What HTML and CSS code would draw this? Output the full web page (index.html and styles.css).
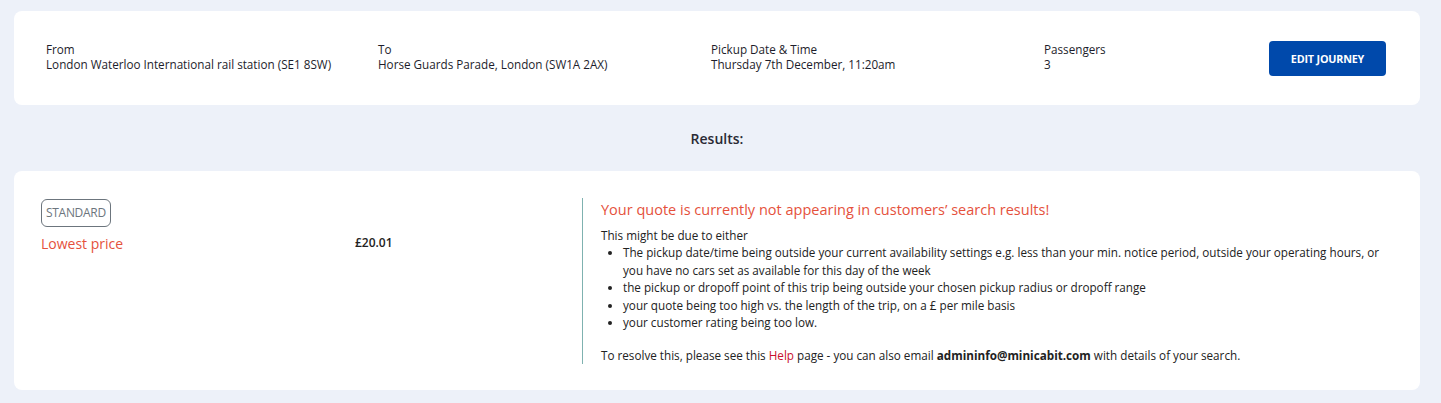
FILE: index.html
```html
<!DOCTYPE html>
<html>
<head>
<meta charset="utf-8">
<link rel="stylesheet" href="styles.css">
</head>
<body>
<div class="page">
  <section class="card journey">
    <div class="field">
      <div class="label">From</div>
      <div class="value">London Waterloo International rail station (SE1 8SW)</div>
    </div>
    <div class="field">
      <div class="label">To</div>
      <div class="value">Horse Guards Parade, London (SW1A 2AX)</div>
    </div>
    <div class="field">
      <div class="label">Pickup Date &amp; Time</div>
      <div class="value">Thursday 7th December, 11:20am</div>
    </div>
    <div class="field last">
      <div>
        <div class="label">Passengers</div>
        <div class="value">3</div>
      </div>
      <button class="edit-btn">EDIT JOURNEY</button>
    </div>
  </section>

  <h2 class="results-title">Results:</h2>

  <section class="card result">
    <div class="quote">
      <div class="quote-type">
        <span class="badge">STANDARD</span>
        <div class="lowest">Lowest price</div>
      </div>
      <div class="price">£20.01</div>
    </div>
    <div class="notice">
      <h3 class="notice-title">Your quote is currently not appearing in customers’ search results!</h3>
      <p class="intro">This might be due to either</p>
      <ul class="reasons">
        <li>The pickup date/time being outside your current availability settings e.g. less than your min. notice period, outside your operating hours, or you have no cars set as available for this day of the week</li>
        <li>the pickup or dropoff point of this trip being outside your chosen pickup radius or dropoff range</li>
        <li>your quote being too high vs. the length of the trip, on a £ per mile basis</li>
        <li>your customer rating being too low.</li>
      </ul>
      <p class="resolve">To resolve this, please see this <a class="help" href="#">Help</a> page - you can also email <b>admininfo@minicabit.com</b> with details of your search.</p>
    </div>
  </section>
</div>
</body>
</html>
```

FILE: styles.css
```css
* { box-sizing: border-box; }
html, body { margin: 0; padding: 0; }
body {
  background: #edf1f9;
  font-family: "Open Sans", "DejaVu Sans", sans-serif;
  color: #222;
  width: 1441px;
  height: 403px;
  overflow: hidden;
}
.page {
  padding: 11px 21px 0 14px;
}
.card {
  background: #fff;
  border-radius: 8px;
}
.journey {
  height: 94px;
  display: grid;
  grid-template-columns: 332px 333px 333px 1fr;
  align-items: center;
  padding: 0 34px 2px 32px;
  font-size: 11.7px;
  line-height: 15.5px;
  color: #1d1d2b;
}
.field.last {
  display: flex;
  justify-content: space-between;
  align-items: center;
}
.edit-btn {
  width: 117px;
  height: 35px;
  border: none;
  border-radius: 4px;
  background: #0049ab;
  color: #fff;
  font-family: "Open Sans", sans-serif;
  font-weight: 700;
  font-size: 10.8px;
  letter-spacing: -0.2px;
  padding: 0;
  margin-top: 3px;
}
.results-title {
  margin: 0;
  height: 66px;
  display: flex;
  align-items: center;
  justify-content: center;
  font-size: 14px;
  font-weight: 600;
  color: #2a2a35;
}
.result {
  height: 219px;
  display: flex;
  padding: 27px 27px 0 27px;
}
.quote {
  flex: none;
  width: 541px;
  display: grid;
  grid-template-columns: 314px 1fr;
  align-items: start;
  padding-top: 1px;
}
.badge {
  display: inline-block;
  border: 1px solid #6c757d;
  border-radius: 6px;
  color: #6c757d;
  font-size: 12px;
  height: 28px;
  line-height: 26px;
  padding: 0 4px;
  letter-spacing: -0.3px;
}
.lowest {
  color: #e5513c;
  font-size: 14px;
  margin-top: 7px;
}
.price {
  font-size: 12px;
  font-weight: 600;
  color: #222;
  padding-top: 35px;
}
.notice {
  flex: 1;
  border-left: 1px solid #7fb2b0;
  padding-left: 18px;
  height: 166px;
  font-size: 11.7px;
  color: #222;
}
.notice-title {
  margin: 2px 0 0;
  font-size: 14.5px;
  font-weight: 400;
  color: #e5513c;
  line-height: 20px;
}
.intro {
  margin: 7px 0 0;
  line-height: 17px;
}
.reasons {
  margin: 0;
  padding-left: 22px;
  line-height: 17.5px;
}
.resolve {
  margin: 15px 0 0;
  line-height: 17px;
}
.help {
  color: #c8102e;
  text-decoration: none;
}
.resolve b { font-weight: 700; }
```
